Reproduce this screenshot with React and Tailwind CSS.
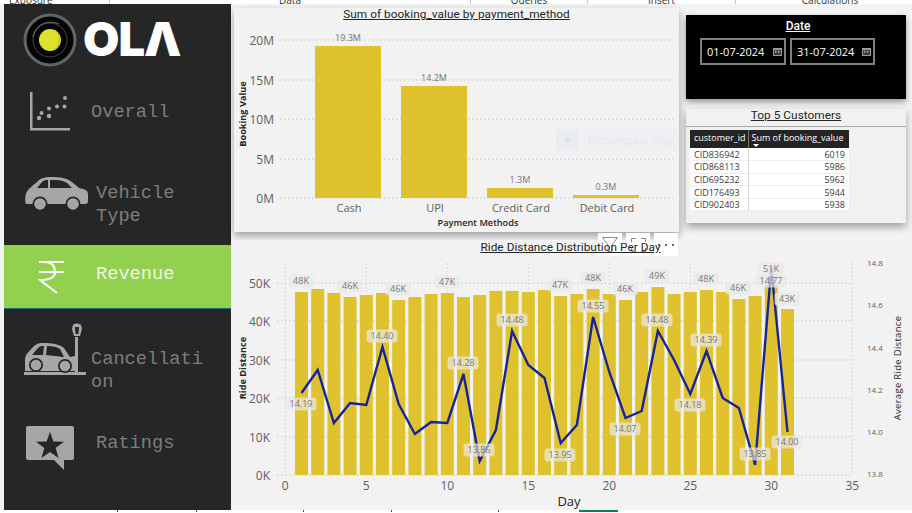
const barTops = [292, 289, 293, 297, 295, 293, 300, 297, 294, 293, 297, 295, 291, 291, 292, 290, 296, 294, 289, 294, 300, 292, 287, 294, 292, 290, 292, 299, 296, 285, 309];
const linePts = [393, 370, 423, 403, 405, 347, 404, 434, 422, 423, 374, 461, 430, 331, 365, 378, 443, 425, 317, 372, 418, 411, 331, 360, 394, 351, 398, 408, 465, 268, 432];
const barLabels = [['48K', 301, 281], ['46K', 350, 286], ['46K', 398, 289], ['47K', 447, 282], ['47K', 560, 285], ['48K', 593, 278], ['46K', 625, 289], ['49K', 657, 276], ['48K', 706, 279], ['46K', 738, 288], ['51K', 771, 269], ['43K', 787, 299]];
const lineLabels = [['14.19', 301, 404], ['14.40', 382, 336], ['14.28', 463, 363], ['13.86', 479, 450], ['14.48', 512, 320], ['13.95', 560, 455], ['14.55', 593, 306], ['14.07', 625, 429], ['14.48', 657, 320], ['14.18', 690, 405], ['14.39', 706, 340], ['13.85', 755, 454], ['14.77', 771, 281], ['14.00', 787, 442]];
const dayX = (d) => 285.3 + d * 16.2;

const customers = [
  ['CID836942', 6019],
  ['CID868113', 5986],
  ['CID695232', 5962],
  ['CID176493', 5944],
  ['CID902403', 5938],
];

function ScatterIcon() {
  return (
    <svg width="40" height="40" viewBox="0 0 40 40" fill="#a6a6a6">
      <path d="M0 0h2.5v36H40v2.5H0z" />
      <circle cx="9" cy="26" r="2.2" /><circle cx="11.5" cy="21" r="2" />
      <circle cx="19" cy="24" r="2.2" /><circle cx="19" cy="16.5" r="2" />
      <circle cx="27" cy="14.5" r="2" /><circle cx="34.5" cy="14.5" r="2" /><circle cx="35" cy="6" r="2" />
    </svg>
  );
}

function CarIcon() {
  return (
    <svg width="64" height="34" viewBox="0 0 64 34" fill="#a6a6a6">
      <path d="M1 17C2 12 9 8 13 4 16 1 20 0 26 0c9 0 16 1 21 5l7 6c5 1 9 2 9 6v7c0 2-1 3-3 3H1c-1 0-1-9 0-10z" />
      <path fill="#262626" d="M12 11 17 5c2-2 4-2 6-2v8zM25 3h5c5 0 9 1 12 3l5 5H25z" />
      <circle cx="15" cy="27" r="7.5" fill="#262626" /><circle cx="15" cy="27" r="5.8" />
      <circle cx="48" cy="27" r="7.5" fill="#262626" /><circle cx="48" cy="27" r="5.8" />
    </svg>
  );
}

function RupeeIcon() {
  return (
    <svg width="27" height="34" viewBox="0 0 27 34" fill="none" stroke="#fff" strokeWidth="2">
      <path d="M1 2h25M1 12h25" />
      <path d="M6 2c7 0 11 3 11 10 0 5-5 8-15 8l17 13" />
    </svg>
  );
}

function CrashIcon() {
  return (
    <svg width="64" height="54" viewBox="0 0 64 54" fill="#a6a6a6">
      <rect x="0" y="49" width="62" height="3" />
      <rect x="51" y="14" width="3" height="36" />
      <path d="M49 2c1-2 6-2 8 0l1 4-2 7h-6l-2-7z" />
      <path fill="#262626" d="M51 4h4l-.5 7h-3z" />
      <path d="M1 37c0-6 4-8 7-12 4-4 6-5 11-5 9 0 16 1 21 5l6 9 5-1v15H1z" />
      <path fill="#262626" d="M8 32 14 25c2-2 3-2 6-2l-1 9zM23 23c6 0 10 1 13 3l4 8-18-2z" />
      <circle cx="12" cy="42" r="7" fill="#262626" /><circle cx="12" cy="42" r="5.3" />
      <circle cx="41" cy="43" r="7" fill="#262626" /><circle cx="41" cy="43" r="5.3" />
    </svg>
  );
}

function RatingIcon() {
  return (
    <svg width="48" height="44" viewBox="0 0 48 44" fill="#a6a6a6">
      <path d="M2 0h44a2 2 0 0 1 2 2v30a2 2 0 0 1-2 2h-8v10l-10-10H2a2 2 0 0 1-2-2V2a2 2 0 0 1 2-2z" />
      <path fill="#262626" d="m24 6 3.4 9.5 10.6.3-8.4 6.2 3 10-8.600-5.900-8.600 5.900 3-10-8.400-6.200 10.600-.3z" />
    </svg>
  );
}

function OlaLogo() {
  return (
    <div className="flex items-center">
      <svg width="54" height="54" viewBox="0 0 54 54">
        <circle cx="27" cy="27" r="26.500" fill="#5f6669" />
        <circle cx="27" cy="27" r="23.500" fill="#050505" />
        <circle cx="27" cy="27" r="17" fill="none" stroke="#555" strokeWidth="0.8" />
        <path d="M10 24C12 12 24 6 36 11" fill="none" stroke="#888" strokeWidth="0.8" />
        <circle cx="27" cy="27" r="11" fill="#dfe22a" />
        <path d="M32 17c6 4 6 15-1 19" fill="none" stroke="#b9b93c" strokeWidth="1" />
      </svg>
      <span className="ml-[6px] mt-[-3px] font-['Inter',sans-serif] font-black text-[47px] leading-none tracking-[-1px] text-white">OLΛ</span>
    </div>
  );
}

function Sidebar() {
  const label = "font-['Liberation_Mono',monospace] text-[18.67px] leading-[23px]";
  return (
    <aside className="w-[227px] h-[506px] bg-[#262626] flex flex-col shrink-0">
      <div className="h-[66px] pl-[19px] pt-[9px]"><OlaLogo /></div>
      <div className="h-[85px] flex items-center">
        <div className="ml-[26px] w-[61px] mt-[-2px]"><ScatterIcon /></div>
        <span className={`${label} text-[#7d7d7d]`}>Overall</span>
      </div>
      <div className="h-[90px] flex items-center">
        <div className="ml-[21px] w-[71px] mt-[-12px]"><CarIcon /></div>
        <span className={`${label} text-[#7d7d7d] mt-[10px]`}>Vehicle<br />Type</span>
      </div>
      <div className="h-[64px] flex items-center bg-[#92d14f] border-b border-[#1d6a72]">
        <div className="ml-[34px] w-[58px] mt-[1px]"><RupeeIcon /></div>
        <span className={`${label} text-[#eef5e4] mt-[-4px]`}>Revenue</span>
      </div>
      <div className="h-[101px] flex items-start">
        <div className="ml-[20px] w-[67px] mt-[14px]"><CrashIcon /></div>
        <span className={`${label} text-[#7d7d7d] w-[115px] break-all mt-[39px]`}>Cancellation</span>
      </div>
      <div className="h-[100px] flex items-start">
        <div className="ml-[22px] w-[70px] mt-[16px]"><RatingIcon /></div>
        <span className={`${label} text-[#7d7d7d] mt-[22px]`}>Ratings</span>
      </div>
    </aside>
  );
}

function BookingChart() {
  const bars = [
    ['Cash', 315, 46, '19.3M', 349],
    ['UPI', 401, 86, '14.2M', 435],
    ['Credit Card', 487, 188, '1.3M', 521],
    ['Debit Card', 573, 195, '0.3M', 607],
  ];
  const ticks = [['20M', 40], ['15M', 80], ['10M', 119], ['5M', 159], ['0M', 198]];
  return (
    <svg width="445" height="209" viewBox="234 23 445 209" className="font-['Open_Sans',sans-serif] block">
      {ticks.map(([t, y]) => (
        <g key={t}>
          <line x1="280" x2="673" y1={y} y2={y} stroke="#c4c4c4" strokeDasharray="1.500 2.500" />
          <text x="274" y={y + 4.5} textAnchor="end" fontSize="12" fill="#605e5c">{t}</text>
        </g>
      ))}
      {bars.map(([name, x, top, val, cx]) => (
        <g key={name}>
          <rect x={x} y={top} width="66" height={198 - top} fill="#e0c22f" />
          <text x={cx - 1} y={top - 5} textAnchor="middle" fontSize="9" fill="#777">{val}</text>
          <text x={cx} y="212" textAnchor="middle" fontSize="11" fill="#605e5c">{name}</text>
        </g>
      ))}
      <text x="478" y="226" textAnchor="middle" fontSize="9.200" fontWeight="600" fill="#252423">Payment Methods</text>
      <text transform="translate(246 114) rotate(-90)" textAnchor="middle" fontSize="9.200" fontWeight="700" fill="#252423">Booking Value</text>
    </svg>
  );
}

function DistanceChart() {
  const left = [['50K', 283], ['40K', 321], ['30K', 360], ['20K', 398], ['10K', 437], ['0K', 475]];
  const right = [['14.8', 263], ['14.6', 305], ['14.4', 348], ['14.2', 390], ['14.0', 432], ['13.8', 474]];
  const xs = [0, 5, 10, 15, 20, 25, 30, 35];
  return (
    <svg width="678" height="256" viewBox="234 254 678 256" className="font-['Open_Sans',sans-serif] block">
      {xs.map((d) => (
        <g key={d}>
          <line x1={dayX(d)} x2={dayX(d)} y1="263" y2="475" stroke="#cfcfcf" strokeDasharray="1.500 2.500" />
          <text x={dayX(d)} y="490" textAnchor="middle" fontSize="12" fill="#605e5c">{d}</text>
        </g>
      ))}
      {left.map(([t, y]) => (
        <g key={t}>
          <line x1="277" x2="853" y1={y} y2={y} stroke="#c4c4c4" strokeDasharray="1.500 2.500" />
          <text x="270" y={y + 4.500} textAnchor="end" fontSize="12" fill="#605e5c">{t}</text>
        </g>
      ))}
      {right.map(([t, y]) => (
        <text key={t} x="867" y={y + 3} fontSize="8" fill="#605e5c">{t}</text>
      ))}
      {barTops.map((top, i) => (
        <rect key={i} x={dayX(i + 1) - 6.500} y={top} width="13" height={475 - top} fill="#e0c22f" />
      ))}
      <polyline points={linePts.map((y, i) => `${dayX(i + 1)},${y}`).join(' ')} fill="none" stroke="#14249a" strokeWidth="2.400" strokeLinejoin="miter" />
      {barLabels.map(([t, x, y], i) => (
        <g key={i}>
          <rect x={x - 12.500} y={y - 6.500} width="25" height="13" rx="3" fill="#e8e8e8" fillOpacity="0.8" />
          <text x={x} y={y + 3.200} textAnchor="middle" fontSize="9" fill="#777">{t}</text>
        </g>
      ))}
      {lineLabels.map(([t, x, y], i) => (
        <g key={i}>
          <rect x={x - 15.500} y={y - 6.500} width="31" height="13" rx="3" fill="#e8e8e8" fillOpacity="0.7" />
          <text x={x} y={y + 3.200} textAnchor="middle" fontSize="9" fill="#777">{t}</text>
        </g>
      ))}
      <text x="569" y="506" textAnchor="middle" fontSize="13" fill="#252423">Day</text>
      <text transform="translate(246 368) rotate(-90)" textAnchor="middle" fontSize="9.200" fontWeight="700" fill="#252423">Ride Distance</text>
      <text transform="translate(901 368) rotate(-90)" textAnchor="middle" fontSize="9.500" letterSpacing="0.3" fill="#252423">Average Ride Distance</text>
    </svg>
  );
}

function DateBox({ value, className }) {
  return (
    <div className={`h-[27px] border-2 border-[#7f7f7f] flex items-center justify-between pl-[5px] pr-[2px] ${className}`}>
      <span className="text-[11px] leading-none text-white">{value}</span>
      <svg width="9" height="8" viewBox="0 0 9 8">
        <rect width="9" height="8" fill="#9a9a9a" />
        <rect y="2" x="1" width="7" height="5" fill="#3c3c3c" />
        <rect y="3" x="2" width="1.500" height="1.500" fill="#bbb" /><rect y="3" x="5" width="1.500" height="1.500" fill="#bbb" />
      </svg>
    </div>
  );
}

export default function App() {
  const title = "font-['Roboto',sans-serif] text-[11.8px] underline text-[#252423] tracking-[0.05px] leading-none";
  const ribbon = "text-[10px] leading-[0px] text-[#333] font-['Open_Sans',sans-serif]";
  return (
    <div className="w-[912px] h-[513px] overflow-hidden bg-[#f3f3f3] flex flex-col font-['Open_Sans',sans-serif]">
      {/* clipped ribbon */}
      <div className="h-[4px] shrink-0 bg-white flex overflow-hidden">
        <div className={`w-[110px] pl-[9px] border-r border-[#c8c8c8] ${ribbon}`}>Exposure</div>
        <div className={`w-[361px] text-center border-r border-[#c8c8c8] ${ribbon}`}>Data</div>
        <div className={`w-[117px] text-center border-r border-[#c8c8c8] ${ribbon}`}>Queries</div>
        <div className={`w-[148px] text-center border-r border-[#c8c8c8] ${ribbon}`}>Insert</div>
        <div className={`w-[176px] text-center pl-[12px] ${ribbon}`}>Calculations</div>
      </div>

      <div className="flex pl-[4px] h-[506px] shrink-0">
        <Sidebar />
        <main className="ml-[3px] w-[678px] flex flex-col">
          <div className="flex h-[236px] shrink-0">
            {/* Booking chart */}
            <section className="relative w-[445px] h-[224px] mt-[4px] bg-[#f2f2f2] shadow-[0_4px_8px_rgba(0,0,0,0.35)]">
              <h2 className={`${title} text-center pt-[1px] h-[15px]`}>Sum of booking_value by payment_method</h2>
              <BookingChart />
              <div className="absolute left-[322px] top-[121px] w-[123px] h-[22px] bg-[#eef0f3] flex items-center text-[11px] text-[#e6e7ea]">
                <span className="w-[22px] h-[22px] mr-[10px] bg-[#e9edf2] flex items-center justify-center">
                  <span className="w-[5px] h-[5px] rounded-full bg-[#dde1e6]" />
                </span>
                Rectangular Snip
              </div>
            </section>

            {/* Date + top customers */}
            <div className="ml-[7px] w-[220px] pt-[11px] flex flex-col">
              <section className="h-[84px] bg-black shadow-[0_3px_6px_rgba(0,0,0,0.4)] pt-[4px]">
                <h2 className="font-['Roboto',sans-serif] text-[12px] font-medium text-center pl-[4px] underline text-white leading-[14px]">Date</h2>
                <div className="flex gap-[4px] pl-[14px] mt-[5px]">
                  <DateBox value="01-07-2024" className="w-[86px]" />
                  <DateBox value="31-07-2024" className="w-[85px]" />
                </div>
              </section>
              <section className="mt-[10px] h-[114px] bg-[#f1f1f1] shadow-[0_4px_8px_rgba(0,0,0,0.35)]">
                <h2 className={`${title} text-center h-[18px] pt-[1px] border-b border-[#a8a8a8]`}>Top 5 Customers</h2>
                <table className="ml-[4px] mt-[3px] w-[159px] table-fixed border-collapse text-[9px] leading-none text-[#3b3a39]">
                  <thead>
                    <tr className="bg-[#252423] text-white h-[18px]">
                      <th className="w-[58px] font-normal text-left pl-[4px] pb-[3px] border-r border-[#777]">customer_id</th>
                      <th className="relative font-normal text-left pl-[3px] pb-[3px] whitespace-nowrap">
                        Sum of booking_value
                        <span className="absolute left-[4px] bottom-[1px] w-0 h-0 border-x-[3px] border-x-transparent border-t-[3px] border-t-white" />
                      </th>
                    </tr>
                  </thead>
                  <tbody>
                    {customers.map(([id, val]) => (
                      <tr key={id} className="bg-white h-[12.6px] border-b border-[#eeeeee]">
                        <td className="pl-[4px] border-r border-[#d8d8d8]">{id}</td>
                        <td className="text-right pr-[4px]">{val}</td>
                      </tr>
                    ))}
                  </tbody>
                </table>
              </section>
            </div>
          </div>

          {/* Ride distance chart */}
          <section className="relative h-[270px] bg-[#f2f2f2]">
            <div className="absolute left-[364px] top-[-7px] flex gap-[4px]">
              <div className="w-[24px] h-[23px] bg-white flex items-center justify-center">
                <svg width="16" height="15" viewBox="0 0 16 15" fill="none" stroke="#8a8a8a"><path d="M.5.5h15L10 8v6.500H6V8z" /></svg>
              </div>
              <div className="w-[24px] h-[23px] bg-white flex items-center justify-center">
                <svg width="15" height="14" viewBox="0 0 15 14" fill="none" stroke="#8a8a8a"><path d="M.5 4V.5H5M10 .5h4.500V4M14.500 10v3.500H10M5 13.500H.5V10" /></svg>
              </div>
              <div className="w-[24px] h-[23px] bg-white flex items-center justify-center gap-[5px]">
                <span className="w-[2px] h-[2px] bg-[#666]" /><span className="w-[2px] h-[2px] bg-[#666]" /><span className="w-[2px] h-[2px] bg-[#666]" />
              </div>
            </div>
            <h2 className={`${title} relative text-center h-[14px] pt-[2px] pr-[5px]`}>Ride Distance Distribution Per Day</h2>
            <DistanceChart />
          </section>
        </main>
      </div>

      <div className="relative h-[3px] bg-white flex">
        <div className="ml-[117px] w-px h-[2px] bg-[#555]" />
        <div className="ml-[78px] w-px h-[2px] bg-[#555]" />
        <div className="ml-[106px] w-px h-[2px] bg-[#555]" />
        <div className="ml-[87px] w-px h-[2px] bg-[#555]" />
        <div className="ml-[106px] w-px h-[2px] bg-[#555]" />
        <div className="ml-[80px] w-[39px] h-[2px] bg-[#0e7a63]" />
      </div>
    </div>
  );
}
